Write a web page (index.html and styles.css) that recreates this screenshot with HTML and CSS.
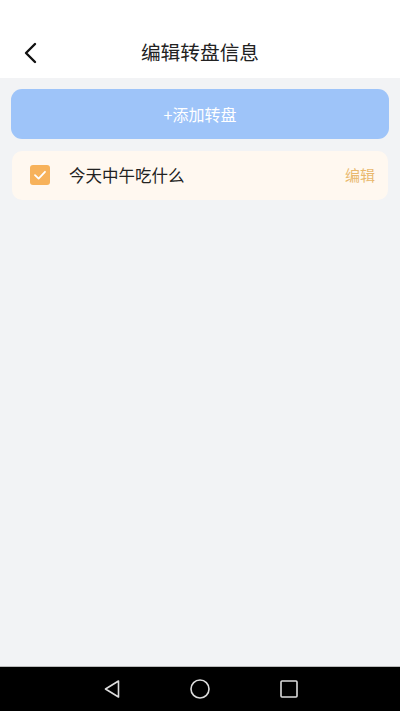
FILE: index.html
```html
<!DOCTYPE html>
<html lang="zh">
<head>
<meta charset="utf-8">
<link rel="stylesheet" href="styles.css">
</head>
<body>
<div class="app">
  <header class="header">
    <div class="status"></div>
    <div class="navbar">
      <svg class="back" width="14" height="22" viewBox="0 0 14 22"><path d="M12 2 L3 11 L12 20" fill="none" stroke="#111" stroke-width="2.4" stroke-linecap="round" stroke-linejoin="round"/></svg>
      <div class="title">编辑转盘信息</div>
    </div>
  </header>
  <main class="main">
    <div class="add-btn">+添加转盘</div>
    <div class="item">
      <div class="check">
        <svg width="20" height="20" viewBox="0 0 20 20"><path d="M5 10.2 L8.6 13.6 L15 6.8" fill="none" stroke="#fff" stroke-width="1.8" stroke-linecap="round" stroke-linejoin="round"/></svg>
      </div>
      <div class="item-name">今天中午吃什么</div>
      <div class="item-edit">编辑</div>
    </div>
  </main>
  <nav class="sysbar">
    <svg width="18" height="20" viewBox="0 0 18 20"><path d="M15.5 2 L2.5 10 L15.5 18 Z" fill="none" stroke="#ddd" stroke-width="1.6" stroke-linejoin="round"/></svg>
    <svg width="22" height="22" viewBox="0 0 22 22"><circle cx="11" cy="11" r="9" fill="none" stroke="#ddd" stroke-width="1.6"/></svg>
    <svg width="20" height="20" viewBox="0 0 20 20"><rect x="2" y="2" width="16" height="16" rx="1" fill="none" stroke="#ddd" stroke-width="1.6"/></svg>
  </nav>
</div>
</body>
</html>
```
FILE: styles.css
```css
html, body {
  margin: 0;
  padding: 0;
}
body {
  font-family: "Noto Sans CJK SC", "Noto Sans", sans-serif;
  background: #f2f3f5;
}
.app {
  height: 711px;
  display: flex;
  flex-direction: column;
}
.header {
  background: #fff;
}
.status {
  height: 27px;
}
.navbar {
  height: 51px;
  display: flex;
  align-items: center;
  justify-content: center;
  position: relative;
}
.back {
  position: absolute;
  left: 23px;
  top: 15px;
}
.title {
  font-size: 19.7px;
  color: #222;
  margin-bottom: 2px;
}
.main {
  flex: 1;
  padding: 11px 11px 0;
  display: flex;
  flex-direction: column;
}
.add-btn {
  height: 50px;
  border-radius: 11px;
  background: #9ec4f9;
  color: #fff;
  font-size: 16px;
  display: flex;
  align-items: center;
  justify-content: center;
}
.item {
  margin: 12px 1px 0;
  height: 49px;
  border-radius: 10px;
  background: #fff8f0;
  display: flex;
  align-items: center;
  padding: 0 13px 0 18px;
}
.check {
  width: 20px;
  height: 20px;
  border-radius: 3px;
  background: #f7b25b;
  display: flex;
  margin-bottom: 2px;
}
.item-name {
  margin-left: 19px;
  font-size: 16.5px;
  color: #222;
  flex: 1;
  margin-bottom: 2px;
}
.item-edit {
  font-size: 15px;
  color: #e9b86e;
  margin-bottom: 2px;
}
.sysbar {
  height: 45px;
  background: #000;
  border-top: 1px solid #bbb;
  box-sizing: border-box;
  display: flex;
  align-items: center;
  justify-content: center;
  gap: 68px;
  padding-left: 2px;
}
```
